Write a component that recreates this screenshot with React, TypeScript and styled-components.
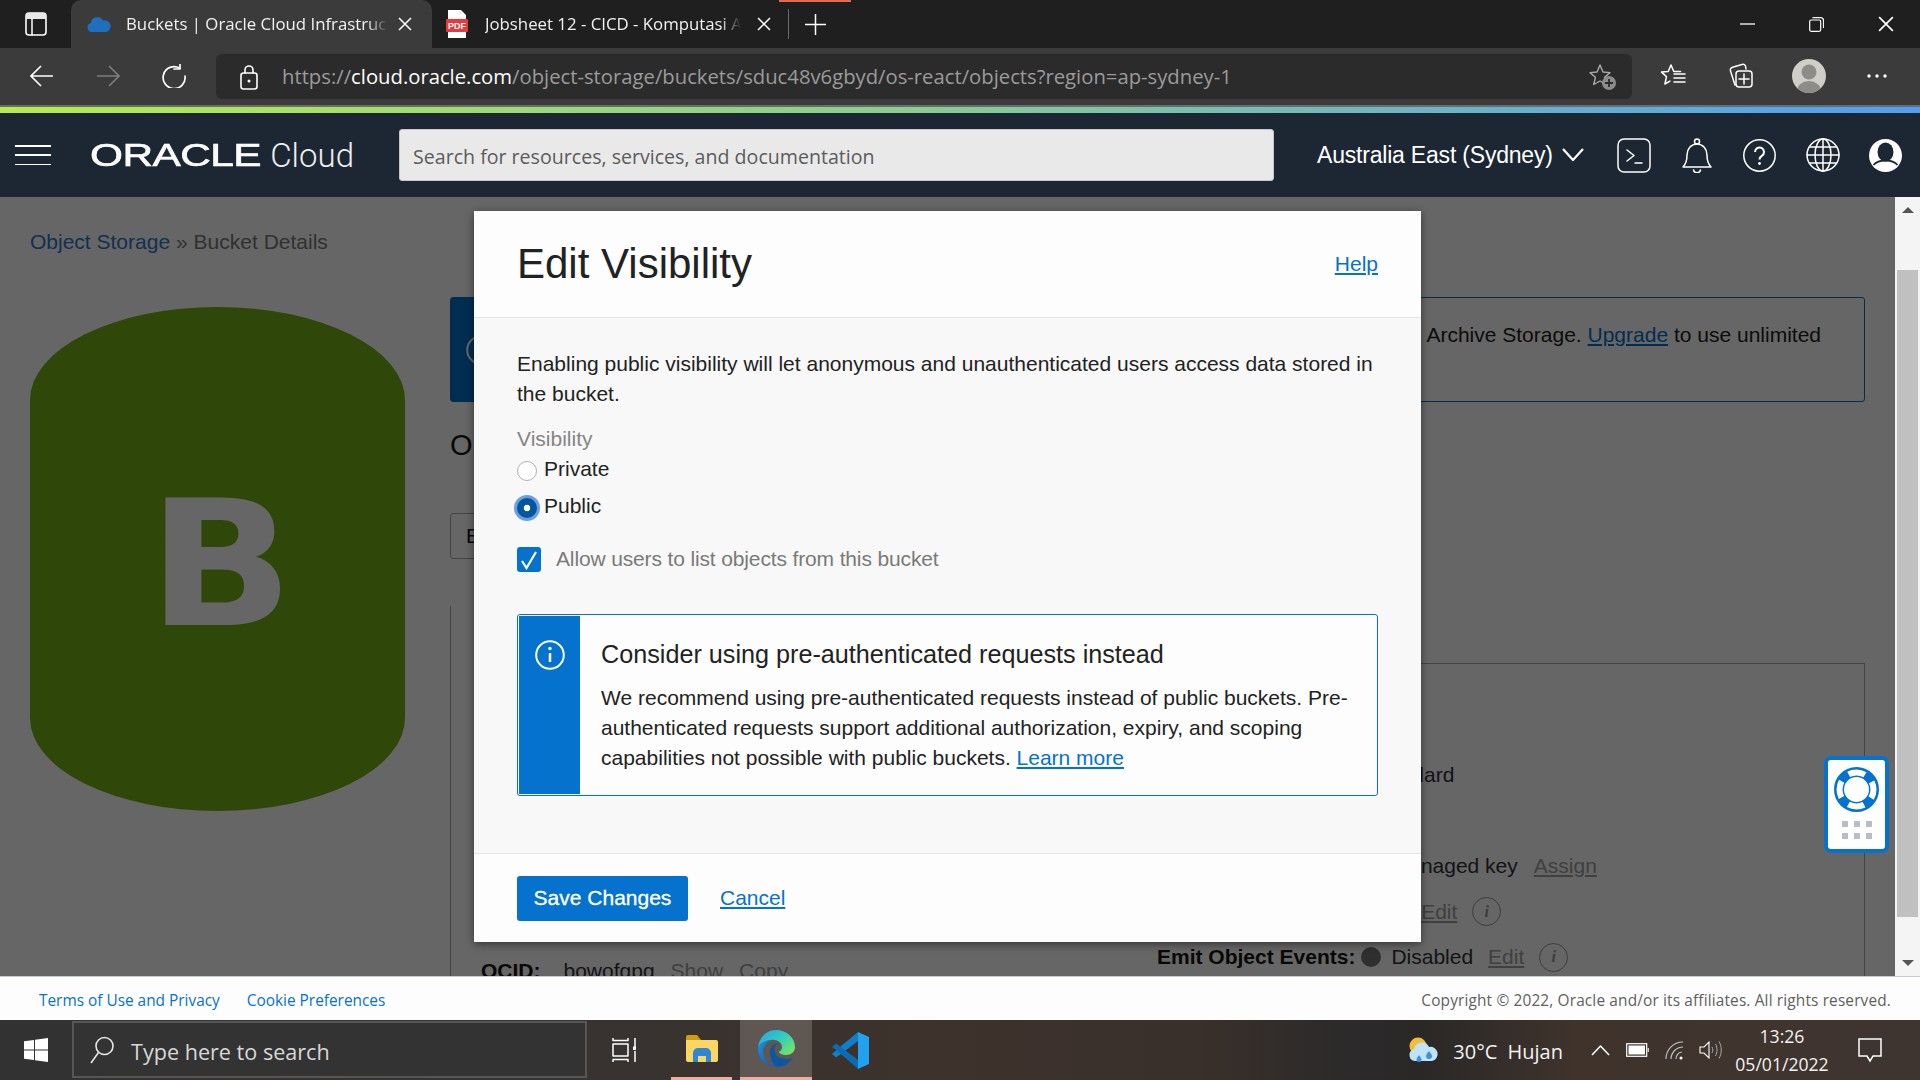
import React from "react";
import styled, { createGlobalStyle } from "styled-components";

const SANS = '"Liberation Sans", Arial, sans-serif';
const SEGOE = '"Open Sans", "Noto Sans", sans-serif';
const BLUE = "#0572ce";

const Global = createGlobalStyle`
  html, body { margin: 0; padding: 0; width: 1920px; height: 1080px; overflow: hidden; background: #fff; }
  * { box-sizing: border-box; }
  svg { display: block; flex: none; }
`;

const Shell = styled.div`
  width: 1920px; height: 1080px; display: flex; flex-direction: column; overflow: hidden; font-family: ${SANS};
`;

/* ---------- browser tabs ---------- */
const TabBar = styled.div`
  position: relative; height: 48px; display: flex; align-items: stretch; background: #1f1f1f; flex: none;
`;
const SideBtn = styled.div`
  width: 71px; display: flex; align-items: center; justify-content: center;
`;
const Tab = styled.div<{ $active?: boolean; $w: number }>`
  width: ${(p) => p.$w}px; display: flex; align-items: center; padding-left: ${(p) => (p.$active ? 16 : 14)}px;
  background: ${(p) => (p.$active ? "#3b3b3b" : "transparent")}; border-radius: 10px 10px 0 0;
`;
const TabTitle = styled.span<{ $w: number; $ml: number }>`
  width: ${(p) => p.$w}px; margin-left: ${(p) => p.$ml}px; padding-bottom: 2px; font: 400 16.8px ${SEGOE}; color: #f1f1f1; white-space: nowrap;
  -webkit-mask-image: linear-gradient(90deg, #000 92%, transparent); mask-image: linear-gradient(90deg, #000 92%, transparent);
`;
const TabClose = styled.div<{ $ml: number }>`
  margin-left: ${(p) => p.$ml}px;
`;
const TabSep = styled.div`
  width: 1px; height: 30px; margin: 9px 16px 0 16px; background: #6a6a6a;
`;
const NewTab = styled.div`
  width: 20px; display: flex; align-items: center; justify-content: center;
`;
const ActivityMark = styled.div`
  position: absolute; left: 779px; top: 0; width: 72px; height: 2px; background: #e56a50;
`;
const WinControls = styled.div`
  margin-left: auto; display: flex;
`;
const WinBtn = styled.div`
  width: 69px; display: flex; align-items: center; justify-content: center;
`;

/* ---------- browser toolbar ---------- */
const Toolbar = styled.div`
  height: 57px; flex: none; background: #3b3b3b; display: flex; padding: 6px 9px 6px 9px; align-items: stretch;
`;
const ToolBtn = styled.div<{ $w: number }>`
  width: ${(p) => p.$w}px; display: flex; align-items: center; justify-content: center; padding-bottom: 2px;
`;
const AddressBar = styled.div`
  width: 1416px; margin: 0 7px 0 9px; background: #2b2b2b; border-radius: 6px; display: flex; align-items: center; padding: 0 15px 0 23px;
`;
const Url = styled.div`
  margin-left: 23px; padding-bottom: 2px; flex: 1; font: 400 20.25px ${SEGOE}; color: #9b9b9b; white-space: nowrap;
  b { font-weight: 400; color: #fff; }
`;
const Accent = styled.div`
  height: 8px; flex: none; border-top: 2px solid #6b6b6b;
  background: linear-gradient(90deg, #b5ec4e 0%, #86cb95 50%, #4f9ff6 100%);
`;

/* ---------- oracle header ---------- */
const Header = styled.header`
  height: 84px; flex: none; background: #1c2733; display: flex; align-items: center; padding: 0 3px 0 15px;
`;
const Hamburger = styled.div`
  width: 36px; height: 20px; display: flex; flex-direction: column; justify-content: space-between;
  span { display: block; height: 1.5px; background: #fff; }
`;
const Logo = styled.div`
  width: 264px; margin-left: 39px; display: flex; align-items: center; color: #fff; height: 40px;
`;
const LogoMark = styled.span`
  display: inline-block; width: 182px; font: 400 30.5px ${SANS}; transform: scaleX(1.39); transform-origin: left center; white-space: nowrap;
  letter-spacing: -0.4px; -webkit-text-stroke: 0.6px #fff;
`;
const LogoWord = styled.span`
  font: 300 33px Roboto, ${SANS}; color: #eee;
`;
const SearchBox = styled.div`
  width: 875px; height: 52px; margin-left: 45px; background: #e9e9e9; border: 1px solid #c4c8cc; border-radius: 3px;
  display: flex; align-items: center; padding: 2px 0 0 13px; font: 400 19.6px ${SEGOE}; color: #5c5c5c;
`;
const Region = styled.div`
  margin-left: 43px; display: flex; align-items: center; gap: 9px; font: 400 23px ${SANS}; color: #fff; letter-spacing: -0.2px; white-space: nowrap;
`;
const HeaderIcons = styled.div`
  margin-left: auto; display: flex;
`;
const HeaderBtn = styled.div`
  width: 63px; display: flex; justify-content: center; align-items: center;
`;

/* ---------- page ---------- */
const Main = styled.div`
  height: 779px; flex: none; display: flex; overflow: hidden; background: #fff;
`;
const Page = styled.div`
  position: relative; flex: 1; overflow: hidden; padding: 33px 30px 0; color: #222; font: 400 21px ${SANS};
`;
const Crumbs = styled.div`
  height: 24px; line-height: 24px; color: #7a7a7a; display: flex; gap: 6px;
  a { color: #2c7ac8; }
`;
const Columns = styled.div`
  display: grid; grid-template-columns: 375px 1fr; column-gap: 45px; margin-top: 43px;
`;
const BucketCol = styled.div`
  padding-top: 10px;
`;
const DetailCol = styled.div`
  min-width: 0;
`;
const Banner = styled.div`
  height: 105px; border: 1px solid ${BLUE}; border-radius: 3px; display: flex; background: #fff;
`;
const BannerBar = styled.div`
  width: 60px; background: ${BLUE}; display: flex; align-items: center; justify-content: center;
`;
const BannerText = styled.div`
  flex: 1; text-align: right; padding: 25px 43px 0 0; white-space: nowrap;
  a { color: ${BLUE}; text-decoration: underline; }
`;
const BucketName = styled.h1`
  margin: 26px 0 0; height: 34px; font: 400 29px/34px ${SANS}; color: #161513;
`;
const ActionRow = styled.div`
  margin-top: 51px; display: flex;
`;
const GhostBtn = styled.div`
  height: 46px; width: 120px; border: 1px solid #aaa; border-radius: 3px; padding-left: 15px; display: flex; align-items: center; color: #161513;
`;
const TabStrip = styled.div`
  margin-top: 47px; height: 57px; border-left: 1px solid #aaa;
`;
const InfoPanel = styled.div`
  border-left: 1px solid #aaa; border-right: 1px solid #aaa;
  display: grid; grid-template-columns: 706px 1fr; height: 340px;
`;
const InfoCol = styled.div<{ $pl: number; $pt: number; $ruled?: boolean }>`
  padding: ${(p) => p.$pt}px 0 0 ${(p) => p.$pl}px; display: flex; flex-direction: column; gap: 7.5px;
  ${(p) => (p.$ruled ? "border-top: 1px solid #aaa;" : "")}
`;
const InfoRow = styled.div`
  height: 38px; display: flex; align-items: center; white-space: nowrap; color: #333;
  strong { color: #161513; margin-right: 6px; }
`;
const Muted = styled.a<{ $ml?: number }>`
  margin-left: ${(p) => p.$ml ?? 16}px; color: #a0a0a0; text-decoration: underline;
`;
const Plain = styled.span<{ $ml?: number }>`
  margin-left: ${(p) => p.$ml ?? 0}px; color: #333;
`;
const StatusDot = styled.span`
  width: 20px; height: 20px; border-radius: 50%; background: #777; margin: 0 10px 0 0;
`;
const InfoDot = styled.span`
  width: 29px; height: 29px; margin-left: 15px; border-radius: 50%; border: 1.5px solid #999; color: #999; display: flex; align-items: center; justify-content: center;
  font: italic 700 16px "Liberation Serif", serif;
`;

/* ---------- modal ---------- */
const Overlay = styled.div`
  position: absolute; inset: 0; background: rgba(0, 0, 0, 0.6); display: flex; justify-content: center; padding-top: 14px;
`;
const Modal = styled.div`
  width: 947px; height: 731px; background: #f8f8f8; border-radius: 3px; display: flex; flex-direction: column; color: #1f1f1f;
  box-shadow: 0 2px 8px rgba(0, 0, 0, 0.5);
`;
const ModalHead = styled.div`
  height: 107px; flex: none; background: #fdfdfd; border-bottom: 1px solid #e4e4e4; display: flex; align-items: center; justify-content: space-between; padding: 0 43px 0 44px;
`;
const ModalTitle = styled.h2`
  margin: 0 0 1px -1px; font: 400 42px ${SANS}; color: #222;
`;
const Link = styled.a`
  color: ${BLUE}; text-decoration: underline; font: 400 21px ${SANS};
`;
const ModalBody = styled.div`
  flex: 1; padding: 31px 44px 0; font: 400 21px/30px ${SANS}; color: #222;
`;
const Intro = styled.p`
  margin: 0 0 0 -1px;
`;
const FieldLabel = styled.div`
  margin: 15px 0 0 -1px; color: #858585;
`;
const RadioRow = styled.div<{ $mt: number }>`
  margin-top: ${(p) => p.$mt}px; height: 30px; display: flex; align-items: center; gap: 7px; margin-left: -4px;
`;
const RadioSlot = styled.span`
  width: 26px; height: 26px; display: flex; align-items: center; justify-content: center; margin-top: 3px; margin-right: -3px;
`;
const RadioOff = styled.span`
  width: 20px; height: 20px; border-radius: 50%; background: #fff; border: 1px solid #b0b0b0;
`;
const RadioOn = styled.span`
  width: 26px; height: 26px; border-radius: 50%; border: 3px solid #6c9ee0;
  background: radial-gradient(circle, #fff 0 3px, #04569f 3.6px);
`;
const CheckRow = styled.div`
  margin: 23px 0 0 -1px; height: 30px; display: flex; align-items: center; gap: 15px; color: #7a7a7a; letter-spacing: -0.14px;
`;
const CheckBox = styled.span`
  width: 24px; height: 25px; margin-top: 1px; border-radius: 3px; background: ${BLUE}; display: flex; align-items: center; justify-content: center;
`;
const Callout = styled.div`
  margin: 40px -1px 0 -1px; height: 182px; border: 1px solid ${BLUE}; border-radius: 3px; background: #fdfdfd; display: flex; overflow: hidden;
`;
const CalloutBar = styled.div`
  width: 61px; flex: none; background: ${BLUE}; margin: 1px 0 1px 1px; display: flex; justify-content: center; padding-top: 24px;
`;
const CalloutBody = styled.div`
  padding: 22px 0 0 21px;
`;
const CalloutTitle = styled.div`
  font: 400 25.2px/34px ${SANS}; color: #222;
`;
const CalloutText = styled.div`
  margin-top: 12px; width: 770px;
`;
const ModalFoot = styled.div`
  height: 89px; flex: none; background: #fdfdfd; border-top: 1px solid #e4e4e4; display: flex; align-items: center; padding: 0 43px; gap: 32px;
`;
const PrimaryBtn = styled.div`
  width: 171px; height: 45px; background: ${BLUE}; border-radius: 3px; color: #fff; display: flex; align-items: center; justify-content: center;
  font: 400 21px ${SANS}; -webkit-text-stroke: 0.3px #fff;
`;
const HelpWidget = styled.div`
  position: absolute; right: 6px; top: 559px; width: 65px; height: 97px; background: #fff; border: 4px solid ${BLUE}; border-radius: 7px;
  display: flex; flex-direction: column; align-items: center; padding-top: 7px;
`;
const HelpDots = styled.div`
  margin-top: 9px; display: grid; grid-template-columns: repeat(3, 6px); gap: 6px;
  span { height: 6px; background: #b8bec5; }
`;

/* ---------- scrollbar ---------- */
const Scrollbar = styled.div`
  width: 25px; flex: none; background: #f4f4f4; display: flex; flex-direction: column; align-items: center; padding-top: 10px;
`;
const ScrollThumb = styled.div`
  width: 21px; height: 647px; margin-top: 57px; background: #c0c0c0;
`;
const ScrollArrow = styled.div<{ $down?: boolean }>`
  width: 0; height: 0; border-left: 6px solid transparent; border-right: 6px solid transparent;
  ${(p) => (p.$down ? "border-top: 6px solid #555; margin-top: 43px;" : "border-bottom: 6px solid #555;")}
`;

/* ---------- site footer ---------- */
const SiteFooter = styled.footer`
  height: 44px; flex: none; background: #fdfdfd; border-top: 1px solid #c6ccd2; display: flex; align-items: center; padding: 4px 29px 0 39px; font: 400 15.4px ${SEGOE};
  a { color: ${BLUE}; margin-right: 27px; }
`;
const Copyright = styled.span`
  margin-left: auto; color: #5f5f5f; letter-spacing: 0.15px;
`;

/* ---------- windows taskbar ---------- */
const Taskbar = styled.div`
  height: 60px; flex: none; display: flex; align-items: stretch; color: #fff;
  background: linear-gradient(90deg, #323232 0%, #383330 34%, #3d322c 48%, #3a302b 62%, #2c2a2a 70%, #2a2827 74%, #3f332c 82%, #3f3530 100%);
`;
const StartBtn = styled.div`
  width: 72px; display: flex; align-items: center; justify-content: center;
`;
const TaskSearch = styled.div`
  width: 515px; margin: 1px 0 2px; background: #333; border: 2px solid #565656; display: flex; align-items: center; padding: 4px 0 0 16px; gap: 17px;
  font: 400 21.6px ${SEGOE}; color: #d8d8d8;
`;
const TaskGlass = styled.span`
  margin-top: -4px;
`;
const TaskItem = styled.div<{ $w: number; $active?: boolean; $open?: boolean }>`
  position: relative; width: ${(p) => p.$w}px; display: flex; align-items: center; justify-content: center;
  background: ${(p) => (p.$active ? "#5f5751" : "transparent")};
  ${(p) => (p.$open ? "border-bottom: 3px solid #f5ab9c;" : "")}
`;
const Tray = styled.div`
  margin-left: auto; display: flex; align-items: center;
`;
const Weather = styled.div`
  margin-left: 14px; padding-top: 2px; font: 400 20px ${SEGOE}; color: #f2f2f2; white-space: nowrap; word-spacing: 5px;
`;
const TrayIcon = styled.div<{ $ml: number }>`
  margin-left: ${(p) => p.$ml}px;
`;
const Clock = styled.div`
  margin-left: 10px; width: 100px; text-align: center; font: 400 17.6px/28px ${SEGOE}; color: #f2f2f2;
`;

/* ---------- icons ---------- */
const Line = { fill: "none", stroke: "#fff", strokeWidth: 1.5, strokeLinecap: "round", strokeLinejoin: "round" } as const;

const WorkspaceIcon = () => (
  <svg width="22" height="24" viewBox="0 0 22 24"><rect x="1" y="1" width="20" height="22" rx="3" {...Line} strokeWidth={1.6} /><path d="M1 7V4a3 3 0 0 1 3-3h14a3 3 0 0 1 3 3v3z" fill="#e8e8e8" /><path d="M7 7v16" {...Line} /></svg>
);
const CloudIcon = () => (
  <svg width="24" height="16" viewBox="0 0 24 16"><path d="M5 16a4.6 4.6 0 0 1-1.2-9A6.6 6.6 0 0 1 16 4.4a5.6 5.6 0 0 1 3.3 11.5z" fill="#1f6fbf" /></svg>
);
const PdfIcon = () => (
  <svg width="22" height="28" viewBox="0 0 22 28"><path d="M2 0h13l5 5v23H2z" fill="#fff" /><rect x="0" y="9" width="22" height="13" rx="1" fill="#e63a3f" /><text x="11" y="19" textAnchor="middle" fontFamily={SANS} fontWeight="700" fontSize="9" fill="#fff">PDF</text></svg>
);
const CloseIcon = ({ s = 14 }: { s?: number }) => (
  <svg width={s} height={s} viewBox="0 0 14 14"><path d="M1 1l12 12M13 1L1 13" {...Line} strokeLinecap="butt" /></svg>
);
const PlusIcon = () => (
  <svg width="21" height="21" viewBox="0 0 21 21"><path d="M10.5 0v21M0 10.5h21" {...Line} strokeLinecap="butt" /></svg>
);
const ArrowIcon = ({ dir, color = "#fff" }: { dir: "l" | "r"; color?: string }) => (
  <svg width="24" height="22" viewBox="0 0 24 22"><path d={dir === "l" ? "M23 11H1M11 1L1 11l10 10" : "M1 11h22M13 1l10 10-10 10"} fill="none" stroke={color} strokeWidth="1.6" /></svg>
);
const ReloadIcon = () => (
  <svg width="24" height="24" viewBox="0 0 24 24"><path d="M17.5 4A11 11 0 1 0 23 12" {...Line} strokeWidth={1.7} /><path d="M18 0v5h-6" {...Line} strokeWidth={1.7} /></svg>
);
const LockIcon = () => (
  <svg width="20" height="26" viewBox="0 0 20 26"><rect x="2" y="9" width="16" height="16" rx="2.5" {...Line} strokeWidth={1.6} /><path d="M6 9V6a4 4 0 0 1 8 0v3" {...Line} strokeWidth={1.6} /><circle cx="10" cy="17" r="1.5" fill="#fff" /></svg>
);
const StarAddIcon = () => (
  <svg width="28" height="28" viewBox="0 0 28 28"><path d="M11 2l3 7 7 .6-5.4 4.7 1.7 7.2L11 18l-6.3 3.5 1.7-7.2L1 9.6 8 9z" fill="none" stroke="#aaa" strokeWidth="1.4" strokeLinejoin="round" /><circle cx="20" cy="20" r="7" fill="#8c8c8c" /><path d="M20 16v8M16 20h8" stroke="#2b2b2b" strokeWidth="1.8" /></svg>
);
const FavListIcon = () => (
  <svg width="26" height="26" viewBox="0 0 26 26"><path d="M11 2l2.8 6.500h6.700M11 2L8.200 8.500 1.500 9.100l5 4.500-1.600 7.400 5-2.900M14 11h11M14 15h11M14 19h11" {...Line} /></svg>
);
const CollectIcon = () => (
  <svg width="26" height="26" viewBox="0 0 26 26"><path d="M7 22L2.500 8a3 3 0 0 1 2-3.800L14 1.500a3 3 0 0 1 3.500 1.500L18 6" {...Line} /><rect x="8" y="8" width="16" height="16" rx="3" {...Line} /><path d="M16 11v10M11 16h10" {...Line} /></svg>
);
const AvatarIcon = () => (
  <svg width="34" height="34" viewBox="0 0 34 34"><defs><clipPath id="av"><circle cx="17" cy="17" r="17" /></clipPath></defs><circle cx="17" cy="17" r="17" fill="#cfcec9" /><circle cx="17" cy="13" r="7.500" fill="#8e8c88" /><ellipse cx="17" cy="32" rx="12" ry="10" fill="#8e8c88" clipPath="url(#av)" /></svg>
);
const DotsIcon = () => (
  <svg width="20" height="4" viewBox="0 0 20 4"><circle cx="2" cy="2" r="1.700" fill="#fff" /><circle cx="10" cy="2" r="1.700" fill="#fff" /><circle cx="18" cy="2" r="1.700" fill="#fff" /></svg>
);
const ChevronIcon = () => (
  <svg width="22" height="14" viewBox="0 0 22 14"><path d="M1 1l10 11L21 1" {...Line} strokeWidth={2.2} strokeLinecap="butt" /></svg>
);
const TerminalIcon = () => (
  <svg width="34" height="35" viewBox="0 0 34 35"><rect x="1" y="1" width="32" height="33" rx="6" {...Line} /><path d="M10 12l7 5.500-7 5.500M18 25h7" {...Line} /></svg>
);
const BellIcon = () => (
  <svg width="30" height="35" viewBox="0 0 30 35"><path d="M1 29c3-3 4-7 4-12 0-6 4-11 10-11s10 5 10 11c0 5 1 9 4 12z" {...Line} /><circle cx="15" cy="3.500" r="2.500" {...Line} /><path d="M11.500 29a3.600 3.600 0 0 0 7 0" {...Line} transform="translate(0 3)" /></svg>
);
const QuestionIcon = () => (
  <svg width="33" height="33" viewBox="0 0 33 33"><circle cx="16.500" cy="16.500" r="15.700" {...Line} /><path d="M12 13a4.500 4.500 0 1 1 7 3.700c-1.600 1.100-2.500 2-2.500 3.800" {...Line} strokeWidth={2} strokeLinecap="butt" /><circle cx="16.500" cy="24.500" r="1.400" fill="#fff" /></svg>
);
const GlobeIcon = () => (
  <svg width="34" height="34" viewBox="0 0 34 34"><circle cx="17" cy="17" r="16" {...Line} /><ellipse cx="17" cy="17" rx="8" ry="16" {...Line} /><path d="M17 1v32M1 17h32M3.500 9h27M3.500 25h27" {...Line} /></svg>
);
const UserIcon = () => (
  <svg width="33" height="33" viewBox="0 0 33 33"><circle cx="16.500" cy="16.500" r="16.500" fill="#fff" /><ellipse cx="16.500" cy="13" rx="8" ry="9.500" fill="#1c2733" /><path d="M4.500 26c3-3.500 7-4.500 12-4.500s9 1 12 4.500" fill="none" stroke="#1c2733" strokeWidth="1.800" /></svg>
);
const BucketIcon = () => (
  <svg width="375" height="504" viewBox="0 0 375 504">
    <path d="M0 93A187.500 93 0 0 1 375 93V411A187.500 93 0 0 1 0 411Z" fill="#76b214" />
    <text x="186" y="318" textAnchor="middle" fontFamily='"DejaVu Sans", sans-serif' fontWeight="700" fontSize="175" fill="#fff" transform="translate(133 0) scale(1.09 1) translate(-133 0)">B</text>
  </svg>
);
const InfoCircle = ({ s = 30 }: { s?: number }) => (
  <svg width={s} height={s} viewBox="0 0 30 30"><circle cx="15" cy="15" r="13.800" {...Line} strokeWidth={2} /><path d="M15 13v9" {...Line} strokeWidth={2.500} strokeLinecap="butt" /><circle cx="15" cy="8.500" r="1.700" fill="#fff" /></svg>
);
const CheckIcon = () => (
  <svg width="18" height="20" viewBox="0 0 18 20"><path d="M2 11l4.500 7L16 2" fill="none" stroke="#fff" strokeWidth="2.200" /></svg>
);
const LifebuoyIcon = () => (
  <svg width="45" height="45" viewBox="0 0 45 45">
    <circle cx="22.500" cy="22.500" r="17.500" fill="none" stroke={BLUE} strokeWidth="10" />
    <circle cx="22.500" cy="22.500" r="17" fill="none" stroke="#fff" strokeWidth="6" strokeDasharray="17 9.700" strokeDashoffset="8.500" transform="rotate(90 22.500 22.500)" />
  </svg>
);
const WindowsIcon = () => (
  <svg width="24" height="24" viewBox="0 0 24 24"><path d="M0 3.300l10-1.400v9.500H0zM11 1.800L24 0v11.400H11zM0 12.500h10v9.600L0 20.700zM11 12.500h13V24l-13-1.800z" fill="#fff" /></svg>
);
const SearchGlass = () => (
  <svg width="24" height="28" viewBox="0 0 24 28"><circle cx="14.500" cy="10" r="8.500" fill="none" stroke="#e6e6e6" strokeWidth="1.600" /><path d="M8.500 16.500L1 27" stroke="#e6e6e6" strokeWidth="1.600" /></svg>
);
const TaskViewIcon = () => (
  <svg width="24" height="24" viewBox="0 0 24 24"><path d="M1 0v2.500h15V0M1 24v-2.500h15V24" {...Line} strokeLinecap="butt" /><rect x="1" y="6" width="15" height="12" {...Line} /><path d="M23 0v9M23 13v11" {...Line} strokeLinecap="butt" /><rect x="21" y="8.500" width="3.500" height="3.500" fill="#fff" /></svg>
);
const FolderIcon = () => (
  <svg width="32" height="27" viewBox="0 0 32 27"><path d="M0 2a2 2 0 0 1 2-2h9l4 5H0z" fill="#d29b0f" /><path d="M0 5h30a2 2 0 0 1 2 2v18a2 2 0 0 1-2 2H2a2 2 0 0 1-2-2z" fill="#fbd664" /><path d="M7 27v-9a5 5 0 0 1 5-5h8a5 5 0 0 1 5 5v9h-5v-6h-8v6z" fill="#2d86d6" /></svg>
);
const EdgeIcon = () => (
  <svg width="37" height="37" viewBox="0 0 37 37">
    <defs>
      <linearGradient id="edgeTop" x1="0" y1="0" x2="1" y2="0.700"><stop offset="0" stopColor="#2c9fe2" /><stop offset="0.550" stopColor="#2fcbc5" /><stop offset="1" stopColor="#6ee36a" /></linearGradient>
      <linearGradient id="edgeLow" x1="0" y1="0" x2="0.800" y2="1"><stop offset="0" stopColor="#1f8fdf" /><stop offset="1" stopColor="#0d5fb4" /></linearGradient>
    </defs>
    <path d="M18 0C29 0 37 8 37 17c0 5-4 8-9 8-4 0-7-2-7-3 0-1 3-1 3-5 0-5-6-8-11-7C7 11 1 14 0 18 1 8 8 0 18 0z" fill="url(#edgeTop)" />
    <path d="M0 18c1-5 7-8 13-8-5 2-8 7-8 12 0 7 6 13 14 15C8 37 0 29 0 18z" fill="url(#edgeLow)" />
    <path d="M12 22c0-5 3-8 8-9-3 2-4 5-3 9 1 5 6 7 12 7 3 0 5-1 6-2-3 6-9 10-16 10-4-2-7-8-7-15z" fill="#0f55a0" />
  </svg>
);
const VsCodeIcon = () => (
  <svg width="37" height="37" viewBox="0 0 37 37"><path d="M26 0l11 5v27l-11 5V0z" fill="#22a2ee" /><path d="M26 0v9L9 22l-5 3.500L0 22l5-4.500L26 0z" fill="#0f7fcb" /><path d="M26 37v-9L9 15l-5-3.500L0 15l5 3.500L26 37z" fill="#0b6cb3" /></svg>
);
const WeatherIcon = () => (
  <svg width="31" height="27" viewBox="0 0 31 27"><circle cx="10" cy="9" r="8.500" fill="#f3bd3c" /><path d="M7 24a6 6 0 0 1-1-11.800A8 8 0 0 1 21 10a6.500 6.500 0 0 1 3 14z" fill="#bfe3f8" /><path d="M21 14c2 2.500 3 4 3 5a3 3 0 0 1-6 0c0-1 1-2.500 3-5zM11 18c1.500 2 2.500 3.500 2.500 4.500a2.500 2.500 0 0 1-5 0c0-1 1-2.500 2.500-4.500z" fill="#3c93dc" /></svg>
);
const CaretUp = () => (
  <svg width="19" height="11" viewBox="0 0 19 11"><path d="M1 10l8.500-9L18 10" {...Line} strokeLinecap="butt" /></svg>
);
const BatteryIcon = () => (
  <svg width="23" height="14" viewBox="0 0 23 14"><rect x="0.700" y="0.700" width="20" height="12.600" fill="none" stroke="#fff" strokeWidth="1.200" /><rect x="2.500" y="2.500" width="16.500" height="9" fill="#fff" /><rect x="21.500" y="5" width="1.500" height="4" fill="#ccc" /></svg>
);
const WifiIcon = () => (
  <svg width="19" height="19" viewBox="0 0 19 19"><path d="M1 18C1 9 8 1 18 1M6 18c0-6 5-12 12-12M11 18c0-3 2-7 6-7" fill="none" stroke="#c8c8c8" strokeWidth="1.100" /><circle cx="16" cy="17" r="1.500" fill="#fff" /></svg>
);
const VolumeIcon = () => (
  <svg width="23" height="20" viewBox="0 0 23 20"><path d="M1 7v6h4l5 5V2L5 7z" fill="none" stroke="#fff" strokeWidth="1.100" /><path d="M13 7c1 2 1 4 0 6M16.500 4c2 4 2 8 0 12M20 1.500c3 5 3 12 0 17" fill="none" stroke="#aaa" strokeWidth="1" /></svg>
);
const ActionCenterIcon = () => (
  <svg width="24" height="25" viewBox="0 0 24 25"><path d="M1 1h22v17h-8l-3 5-3-5H1z" {...Line} strokeLinecap="butt" strokeLinejoin="miter" /></svg>
);

const App = () => (
  <Shell>
    <Global />
    <TabBar>
      <SideBtn><WorkspaceIcon /></SideBtn>
      <Tab $active $w={361}>
        <CloudIcon />
        <TabTitle $w={262} $ml={15}>Buckets | Oracle Cloud Infrastruc</TabTitle>
        <TabClose $ml={10}><CloseIcon /></TabClose>
      </Tab>
      <Tab $w={340}>
        <PdfIcon />
        <TabTitle $w={256} $ml={17}>Jobsheet 12 - CICD - Komputasi A</TabTitle>
        <TabClose $ml={16}><CloseIcon /></TabClose>
      </Tab>
      <TabSep />
      <NewTab><PlusIcon /></NewTab>
      <ActivityMark />
      <WinControls>
        <WinBtn><svg width="15" height="2" viewBox="0 0 15 2"><path d="M0 1h15" stroke="#fff" strokeWidth="1.300" /></svg></WinBtn>
        <WinBtn><svg width="15" height="15" viewBox="0 0 15 15"><rect x="0.700" y="3" width="11" height="11.300" rx="1.500" fill="none" stroke="#fff" strokeWidth="1.200" /><path d="M3.500 0.700h8a3 3 0 0 1 3 3V11" fill="none" stroke="#fff" strokeWidth="1.200" /></svg></WinBtn>
        <WinBtn><CloseIcon s={16} /></WinBtn>
      </WinControls>
    </TabBar>

    <Toolbar>
      <ToolBtn $w={66}><ArrowIcon dir="l" /></ToolBtn>
      <ToolBtn $w={66}><ArrowIcon dir="r" color="#7d7d7d" /></ToolBtn>
      <ToolBtn $w={66}><ReloadIcon /></ToolBtn>
      <AddressBar>
        <LockIcon />
        <Url>https://<b>cloud.oracle.com</b>/object-storage/buckets/sduc48v6gbyd/os-react/objects?region=ap-sydney-1</Url>
        <StarAddIcon />
      </AddressBar>
      <ToolBtn $w={68}><FavListIcon /></ToolBtn>
      <ToolBtn $w={68}><CollectIcon /></ToolBtn>
      <ToolBtn $w={68}><AvatarIcon /></ToolBtn>
      <ToolBtn $w={68}><DotsIcon /></ToolBtn>
    </Toolbar>
    <Accent />

    <Header>
      <Hamburger><span /><span /><span /></Hamburger>
      <Logo><LogoMark>ORACLE</LogoMark><LogoWord>Cloud</LogoWord></Logo>
      <SearchBox>Search for resources, services, and documentation</SearchBox>
      <Region>Australia East (Sydney) <ChevronIcon /></Region>
      <HeaderIcons>
        <HeaderBtn><TerminalIcon /></HeaderBtn>
        <HeaderBtn><BellIcon /></HeaderBtn>
        <HeaderBtn><QuestionIcon /></HeaderBtn>
        <HeaderBtn><GlobeIcon /></HeaderBtn>
        <HeaderBtn><UserIcon /></HeaderBtn>
      </HeaderIcons>
    </Header>

    <Main>
      <Page>
        <Crumbs><a>Object Storage</a> » Bucket Details</Crumbs>
        <Columns>
          <BucketCol><BucketIcon /></BucketCol>
          <DetailCol>
            <Banner>
              <BannerBar><InfoCircle /></BannerBar>
              <BannerText>Archive Storage. <a>Upgrade</a> to use unlimited</BannerText>
            </Banner>
            <BucketName>OS</BucketName>
            <ActionRow><GhostBtn>E</GhostBtn></ActionRow>
            <TabStrip />
            <InfoPanel>
              <InfoCol $pl={30} $pt={16}>
                <InfoRow />
                <InfoRow />
                <InfoRow />
                <InfoRow />
                <InfoRow />
                <InfoRow />
                <InfoRow><strong>OCID:</strong><Plain $ml={17}>bowofgpg</Plain><Muted>Show</Muted><Muted>Copy</Muted></InfoRow>
              </InfoCol>
              <InfoCol $pl={0} $pt={1} $ruled>
                <InfoRow />
                <InfoRow />
                <InfoRow><strong>Default Storage Tier:</strong>Standard</InfoRow>
                <InfoRow />
                <InfoRow><strong>Encryption Key:</strong>Oracle managed key<Muted>Assign</Muted></InfoRow>
                <InfoRow><strong>Auto-Tiering:</strong><StatusDot />Disabled<Muted $ml={15}>Edit</Muted><InfoDot>i</InfoDot></InfoRow>
                <InfoRow><strong>Emit Object Events:</strong><StatusDot />Disabled<Muted $ml={15}>Edit</Muted><InfoDot>i</InfoDot></InfoRow>
              </InfoCol>
            </InfoPanel>
          </DetailCol>
        </Columns>

        <Overlay>
          <Modal>
            <ModalHead>
              <ModalTitle>Edit Visibility</ModalTitle>
              <Link>Help</Link>
            </ModalHead>
            <ModalBody>
              <Intro>Enabling public visibility will let anonymous and unauthenticated users access data stored in the bucket.</Intro>
              <FieldLabel>Visibility</FieldLabel>
              <RadioRow $mt={0}><RadioSlot><RadioOff /></RadioSlot>Private</RadioRow>
              <RadioRow $mt={7}><RadioSlot><RadioOn /></RadioSlot>Public</RadioRow>
              <CheckRow><CheckBox><CheckIcon /></CheckBox>Allow users to list objects from this bucket</CheckRow>
              <Callout>
                <CalloutBar><InfoCircle /></CalloutBar>
                <CalloutBody>
                  <CalloutTitle>Consider using pre-authenticated requests instead</CalloutTitle>
                  <CalloutText>We recommend using pre-authenticated requests instead of public buckets. Pre-authenticated requests support additional authorization, expiry, and scoping capabilities not possible with public buckets. <Link>Learn more</Link></CalloutText>
                </CalloutBody>
              </Callout>
            </ModalBody>
            <ModalFoot>
              <PrimaryBtn>Save Changes</PrimaryBtn>
              <Link>Cancel</Link>
            </ModalFoot>
          </Modal>
        </Overlay>
        <HelpWidget>
          <LifebuoyIcon />
          <HelpDots><span /><span /><span /><span /><span /><span /></HelpDots>
        </HelpWidget>
      </Page>
      <Scrollbar>
        <ScrollArrow />
        <ScrollThumb />
        <ScrollArrow $down />
      </Scrollbar>
    </Main>

    <SiteFooter>
      <a>Terms of Use and Privacy</a>
      <a>Cookie Preferences</a>
      <Copyright>Copyright © 2022, Oracle and/or its affiliates. All rights reserved.</Copyright>
    </SiteFooter>

    <Taskbar>
      <StartBtn><WindowsIcon /></StartBtn>
      <TaskSearch><TaskGlass><SearchGlass /></TaskGlass>Type here to search</TaskSearch>
      <TaskItem $w={74}><TaskViewIcon /></TaskItem>
      <TaskItem $w={10} />
      <TaskItem $w={61} $open><FolderIcon /></TaskItem>
      <TaskItem $w={8} />
      <TaskItem $w={72} $active $open><EdgeIcon /></TaskItem>
      <TaskItem $w={76}><VsCodeIcon /></TaskItem>
      <Tray>
        <WeatherIcon />
        <Weather>30°C Hujan</Weather>
        <TrayIcon $ml={28}><CaretUp /></TrayIcon>
        <TrayIcon $ml={16}><BatteryIcon /></TrayIcon>
        <TrayIcon $ml={16}><WifiIcon /></TrayIcon>
        <TrayIcon $ml={15}><VolumeIcon /></TrayIcon>
        <Clock>13:26<br />05/01/2022</Clock>
        <TrayIcon $ml={26}><ActionCenterIcon /></TrayIcon>
        <TrayIcon $ml={38} />
      </Tray>
    </Taskbar>
  </Shell>
);

export default App;
